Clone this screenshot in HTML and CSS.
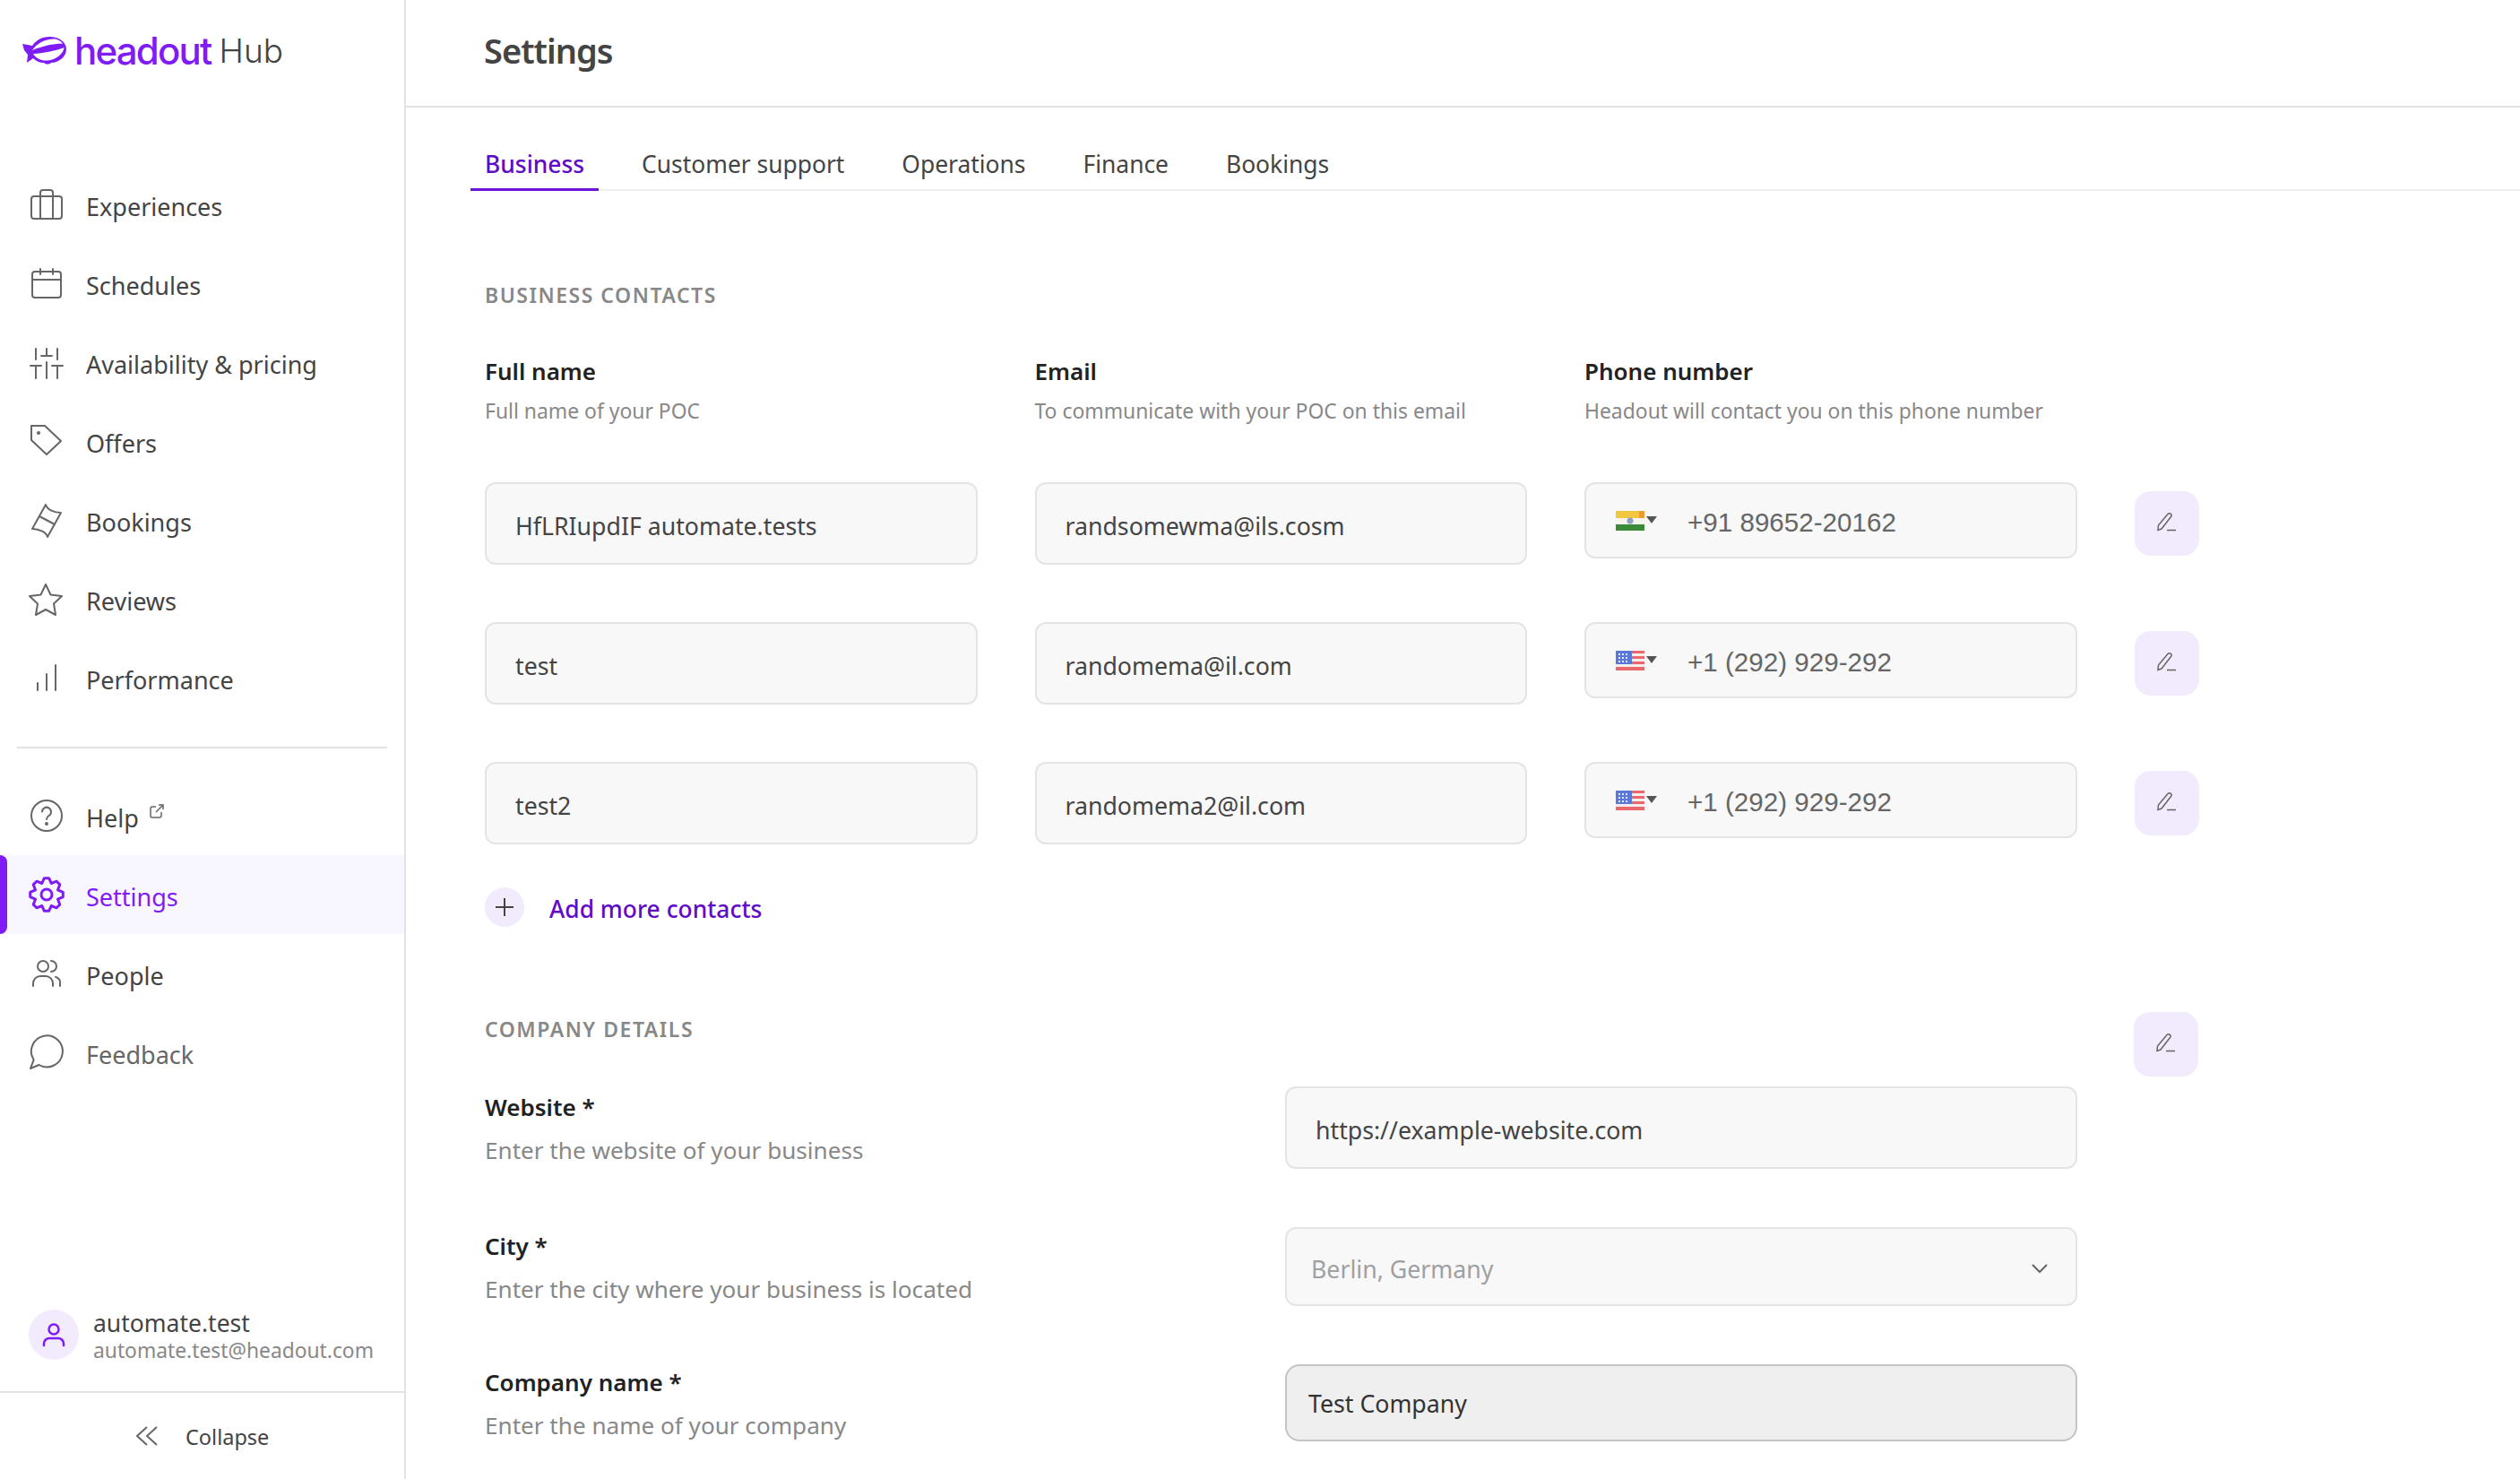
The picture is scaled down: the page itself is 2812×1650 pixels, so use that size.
FILE: index.html
```html
<!DOCTYPE html>
<html lang="en">
<head>
    <meta charset="UTF-8">
    <title>Settings - Headout Hub</title>
    <link rel="stylesheet" href="styles.css">
</head>
<body>
    <div class="app">
        <aside class="sidebar">
            <div class="logo">
                <svg class="logo-mark" width="50" height="33" viewBox="0 0 50 33">
                    <path fill="#7f1cf6" d="M1 9L12 11C16 5 23 1 31 1C42 1 50 7 50 15C50 23 42 30 33 30C31 32 27 32 25 30C20 30 16 28 13 25L6 30L7 21L3 16z"/>
                    <path fill="#fff" d="M12 16C17 8 28 2.500 38 3.500C41 4 44 6 46 8.700C36 8.500 24 11 12 16z"/>
                    <path fill="#fff" d="M13 20C24 19.500 37 17 47.500 13C47 20 38 27 29 27.500C22 28 16 25 13 20z"/>
                </svg>
                <span class="logo-name">headout</span>
                <span class="logo-hub">Hub</span>
            </div>

            <nav class="nav">
                <a class="nav-item">
                    <svg class="nav-icon" viewBox="0 0 40 40"><rect x="3" y="9" width="34" height="25" rx="3"/><path d="M13 9V5a3 3 0 0 1 3-3h8a3 3 0 0 1 3 3v4M13 9v25M27 9v25"/></svg>
                    <span>Experiences</span>
                </a>
                <a class="nav-item">
                    <svg class="nav-icon" viewBox="0 0 40 40"><rect x="4" y="5" width="32" height="29" rx="3"/><path d="M4 14h32M13 2v6M27 2v6"/></svg>
                    <span>Schedules</span>
                </a>
                <a class="nav-item">
                    <svg class="nav-icon" viewBox="0 0 40 40"><path d="M8 3v12M2 22h12M8 22v14M20 3v8M14 11h12M20 18v18M32 3v12M26 22h12M32 22v14"/></svg>
                    <span>Availability &amp; pricing</span>
                </a>
                <a class="nav-item">
                    <svg class="nav-icon" viewBox="0 0 40 40"><path d="M3 1h15l18 17-16 15L3 17z"/><circle class="dot" cx="11" cy="9" r="1"/></svg>
                    <span>Offers</span>
                </a>
                <a class="nav-item">
                    <svg class="nav-icon" viewBox="0 0 40 40"><path d="M19 1c1 5 9 9 17 9L21 37c-1-5-9-9-17-9zM12 14l17 9"/></svg>
                    <span>Bookings</span>
                </a>
                <a class="nav-item">
                    <svg class="nav-icon" viewBox="0 0 40 40"><path d="M19 2l5.500 11.500L37 15l-9 8.500 2 12.500-11-6-11 6 2-12.500L1 15l12.500-1.500z"/></svg>
                    <span>Reviews</span>
                </a>
                <a class="nav-item">
                    <svg class="nav-icon" viewBox="0 0 40 40"><path d="M10 24v8M20 14v18M30 4v28"/></svg>
                    <span>Performance</span>
                </a>
            </nav>

            <div class="nav-divider"></div>

            <nav class="nav nav-lower">
                <a class="nav-item">
                    <svg class="nav-icon" viewBox="0 0 40 40"><circle cx="20" cy="20" r="17"/><path d="M15 15.500a5 5 0 1 1 7.500 4.500c-1.500 1-2.500 2-2.500 4"/><circle class="dot" cx="20" cy="29" r="1"/></svg>
                    <span>Help</span>
                    <svg class="ext-icon" viewBox="0 0 16 16"><path d="M7 3H3a2 2 0 0 0-2 2v8a2 2 0 0 0 2 2h8a2 2 0 0 0 2-2V9M7 9l8-8M10 1h5v5"/></svg>
                </a>
                <a class="nav-item active">
                    <svg class="nav-icon" viewBox="0 0 40 40"><path d="M17.400 1.700H22.600L25.200 7.500L31.100 5.200L34.800 8.900L32.500 14.800L38.300 17.400V22.600L32.500 25.200L34.800 31.100L31.100 34.800L25.200 32.500L22.600 38.300H17.400L14.800 32.500L8.900 34.800L5.200 31.100L7.500 25.200L1.700 22.600V17.400L7.500 14.800L5.200 8.900L8.900 5.200L14.800 7.500Z"/><circle cx="20" cy="20" r="6"/></svg>
                    <span>Settings</span>
                </a>
                <a class="nav-item">
                    <svg class="nav-icon" viewBox="0 0 40 40"><circle cx="16" cy="12" r="6"/><path d="M5 34v-3a8 8 0 0 1 8-8h6a8 8 0 0 1 8 8v3M25 6a6 6 0 0 1 0 12M30 24a6 6 0 0 1 5 7v3"/></svg>
                    <span>People</span>
                </a>
                <a class="nav-item nav-item-light">
                    <svg class="nav-icon" viewBox="0 0 40 40"><path d="M2 38l3.600-9.700A17.500 17.500 0 1 1 11.500 34z"/></svg>
                    <span>Feedback</span>
                </a>
            </nav>

            <div class="user">
                <div class="avatar">
                    <svg width="56" height="56" viewBox="0 0 56 56"><circle cx="28" cy="22" r="5.500"/><path d="M17 40v-2a6 6 0 0 1 6-6h10a6 6 0 0 1 6 6v2"/></svg>
                </div>
                <div class="user-text">
                    <div class="user-name">automate.test</div>
                    <div class="user-mail">automate.test@headout.com</div>
                </div>
            </div>
            <div class="collapse">
                <svg width="24" height="22" viewBox="0 0 24 22"><path d="M12 1L1 11l11 10M23 1L12 11l11 10"/></svg>
                <span>Collapse</span>
            </div>
        </aside>

        <main class="main">
            <div class="page-header"><h1>Settings</h1></div>

            <div class="tabs">
                <div class="tab active">Business</div>
                <div class="tab">Customer support</div>
                <div class="tab">Operations</div>
                <div class="tab">Finance</div>
                <div class="tab">Bookings</div>
            </div>

            <div class="content">
                <h2 class="section-title">BUSINESS CONTACTS</h2>

                <div class="contact-grid contact-head">
                    <div>
                        <div class="label">Full name</div>
                        <div class="hint">Full name of your POC</div>
                    </div>
                    <div>
                        <div class="label">Email</div>
                        <div class="hint">To communicate with your POC on this email</div>
                    </div>
                    <div>
                        <div class="label">Phone number</div>
                        <div class="hint">Headout will contact you on this phone number</div>
                    </div>
                </div>

                <div class="contact-grid">
                    <div class="field">HfLRIupdIF automate.tests</div>
                    <div class="field">randsomewma@ils.cosm</div>
                    <div class="phone">
                        <svg class="flag" viewBox="0 0 32 22"><rect width="32" height="8" fill="#f3c63f"/><rect x="26" width="6" height="8" fill="#ee9a2e"/><rect y="8" width="32" height="7" fill="#f6f4ec"/><rect y="15" width="32" height="7" fill="#3c8a3a"/><circle cx="16" cy="11" r="3.500" fill="#8f9dc4"/></svg>
                        <span class="caret"></span>
                        <span class="phone-num">+91 89652-20162</span>
                    </div>
                    <div class="edit-btn"><svg viewBox="0 0 24 24"><path d="M2 19.500L2.500 14L13 1.500C14 .5 15.500 .5 16.500 1.500C17.500 2.500 17.500 3.500 16.500 4.500L6 18zM12 19.500H22"/></svg></div>
                </div>

                <div class="contact-grid">
                    <div class="field">test</div>
                    <div class="field">randomema@il.com</div>
                    <div class="phone">
                        <svg class="flag" viewBox="0 0 32 22"><rect width="32" height="22" fill="#f6eeee"/><path fill="#e8686c" d="M0 0h32v3H0zM0 6h32v3H0zM0 12h32v3H0zM0 18h32v4H0z"/><rect width="18" height="15" fill="#5a78d8"/><path fill="#dfe6fb" d="M3 3h2v2H3zM7 3h2v2H7zM11 3h2v2h-2zM3 7h2v2H3zM7 7h2v2H7zM11 7h2v2h-2zM3 11h2v2H3zM7 11h2v2H7zM11 11h2v2h-2z"/></svg>
                        <span class="caret"></span>
                        <span class="phone-num">+1 (292) 929-292</span>
                    </div>
                    <div class="edit-btn"><svg viewBox="0 0 24 24"><path d="M2 19.500L2.500 14L13 1.500C14 .5 15.500 .5 16.500 1.500C17.500 2.500 17.500 3.500 16.500 4.500L6 18zM12 19.500H22"/></svg></div>
                </div>

                <div class="contact-grid">
                    <div class="field">test2</div>
                    <div class="field">randomema2@il.com</div>
                    <div class="phone">
                        <svg class="flag" viewBox="0 0 32 22"><rect width="32" height="22" fill="#f6eeee"/><path fill="#e8686c" d="M0 0h32v3H0zM0 6h32v3H0zM0 12h32v3H0zM0 18h32v4H0z"/><rect width="18" height="15" fill="#5a78d8"/><path fill="#dfe6fb" d="M3 3h2v2H3zM7 3h2v2H7zM11 3h2v2h-2zM3 7h2v2H3zM7 7h2v2H7zM11 7h2v2h-2zM3 11h2v2H3zM7 11h2v2H7zM11 11h2v2h-2z"/></svg>
                        <span class="caret"></span>
                        <span class="phone-num">+1 (292) 929-292</span>
                    </div>
                    <div class="edit-btn"><svg viewBox="0 0 24 24"><path d="M2 19.500L2.500 14L13 1.500C14 .5 15.500 .5 16.500 1.500C17.500 2.500 17.500 3.500 16.500 4.500L6 18zM12 19.500H22"/></svg></div>
                </div>

                <div class="add-more">
                    <span class="add-circle"><svg width="22" height="22" viewBox="0 0 22 22"><path d="M11 1v20M1 11h20"/></svg></span>
                    <span>Add more contacts</span>
                </div>

                <div class="company-head">
                    <h2 class="section-title">COMPANY DETAILS</h2>
                    <div class="edit-btn"><svg viewBox="0 0 24 24"><path d="M2 19.500L2.500 14L13 1.500C14 .5 15.500 .5 16.500 1.500C17.500 2.500 17.500 3.500 16.500 4.500L6 18zM12 19.500H22"/></svg></div>
                </div>

                <div class="company-row">
                    <div class="company-text">
                        <div class="label">Website *</div>
                        <div class="hint-big">Enter the website of your business</div>
                    </div>
                    <div class="field">https://example-website.com</div>
                </div>
                <div class="company-row">
                    <div class="company-text">
                        <div class="label">City *</div>
                        <div class="hint-big">Enter the city where your business is located</div>
                    </div>
                    <div class="select">
                        <span>Berlin, Germany</span>
                        <svg width="20" height="12" viewBox="0 0 20 12"><path d="M2 2l8 8 8-8"/></svg>
                    </div>
                </div>
                <div class="company-row">
                    <div class="company-text">
                        <div class="label">Company name *</div>
                        <div class="hint-big">Enter the name of your company</div>
                    </div>
                    <div class="field-active">Test Company</div>
                </div>
            </div>
        </main>
    </div>
</body>
</html>
```

FILE: styles.css
```css
* {
    margin: 0;
    padding: 0;
    box-sizing: border-box;
}
html, body {
    height: 100%;
    overflow: hidden;
}
body {
    font-family: "Noto Sans", "Open Sans", sans-serif;
    background: white;
    color: #444;
}
.app {
    display: flex;
    height: 1650px;
}

/* sidebar */
.sidebar {
    width: 453px;
    flex-shrink: 0;
    border-right: 2px solid #e2e2e2;
    display: flex;
    flex-direction: column;
}
.logo {
    height: 186px;
    padding: 36px 0 0 24px;
    display: flex;
    align-items: flex-start;
}
.logo-mark {
    margin-top: 4px;
}
.logo-name {
    font-family: Inter, sans-serif;
    font-size: 42px;
    line-height: 42px;
    font-weight: 500;
    letter-spacing: -1.800px;
    color: #7f1cf6;
    margin-left: 9px;
}
.logo-hub {
    font-family: Inter, sans-serif;
    font-size: 37px;
    line-height: 42px;
    font-weight: 300;
    color: #444;
    margin-left: 9px;
}
.nav-item {
    height: 88px;
    display: flex;
    align-items: center;
    padding-left: 32px;
    font-size: 27px;
    color: #444;
}
.nav-lower .nav-item span {
    margin-top: 4px;
}
.nav-icon {
    width: 40px;
    height: 40px;
    margin-right: 24px;
    fill: none;
    stroke: #666;
    stroke-width: 2;
    stroke-linejoin: round;
    stroke-linecap: round;
    flex-shrink: 0;
}
.nav-icon .dot {
    fill: #666;
}
.nav-item-light {
    color: #666;
}
.ext-icon {
    width: 16px;
    height: 16px;
    margin: -10px 0 0 12px;
    fill: none;
    stroke: #666;
    stroke-width: 1.500;
}
.nav-item.active {
    position: relative;
    background: #f8f6fe;
    color: #7f1cf6;
}
.nav-item.active::before {
    content: "";
    position: absolute;
    left: 0;
    top: 0;
    bottom: 0;
    width: 8px;
    background: #7f1cf6;
    border-radius: 0 8px 8px 0;
}
.nav-item.active .nav-icon {
    stroke: #7f1cf6;
    stroke-width: 3;
}
.nav-divider {
    height: 2px;
    margin: 31px 19px;
    background: #e2e2e2;
}
.user {
    margin-top: auto;
    height: 106px;
    display: flex;
    align-items: center;
    padding: 0 0 22px 32px;
    border-bottom: 2px solid #e2e2e2;
}
.avatar {
    width: 56px;
    height: 56px;
    border-radius: 50%;
    background: #f2eafd;
    margin-right: 16px;
}
.avatar svg {
    fill: none;
    stroke: #7f1cf6;
    stroke-width: 2.500;
    stroke-linecap: round;
}
.user-text {
    margin-top: 3px;
}
.user-name {
    font-size: 26.500px;
    line-height: 31px;
    color: #444;
}
.user-mail {
    font-size: 22.800px;
    line-height: 29px;
    color: #888;
}
.collapse {
    height: 96px;
    display: flex;
    align-items: center;
    padding-left: 152px;
    font-size: 23.500px;
    color: #444;
}
.collapse span {
    margin-top: 2px;
}
.collapse svg {
    fill: none;
    stroke: #666;
    stroke-width: 2;
    margin-right: 31px;
}

/* main */
.main {
    flex: 1;
    min-width: 0;
}
.page-header {
    height: 120px;
    border-bottom: 2px solid #e2e2e2;
    padding: 30px 0 0 87px;
}
.page-header h1 {
    font-size: 38px;
    line-height: 52px;
    font-weight: 600;
    letter-spacing: -1px;
    color: #444;
}
.tabs {
    height: 93px;
    margin-left: 72px;
    display: flex;
    gap: 32px;
    align-items: flex-end;
    border-bottom: 2px solid #f0f0f0;
}
.tab {
    height: 51px;
    padding: 0 16px;
    font-size: 26.400px;
    line-height: 42px;
    color: #444;
    margin-bottom: -2px;
}
.tab.active {
    color: #5f0cc7;
    font-weight: 500;
    border-bottom: 3px solid #6a14d8;
}
.content {
    padding: 0 0 0 88px;
}
.section-title {
    font-size: 23px;
    line-height: 28px;
    font-weight: 600;
    letter-spacing: 1.500px;
    color: #888;
    padding-top: 102px;
}
.contact-grid {
    display: grid;
    grid-template-columns: repeat(3, 549.500px) 72px;
    column-gap: 64px;
    align-items: start;
    height: 156px;
}
.contact-head {
    height: 195px;
    padding-top: 51px;
}
.label {
    font-size: 26px;
    line-height: 40px;
    font-weight: 600;
    color: #222;
}
.hint {
    font-size: 22.900px;
    line-height: 32px;
    margin-top: 9px;
    color: #888;
}
.company-text .label {
    line-height: 36px;
}
.hint-big {
    font-size: 26.100px;
    line-height: 36px;
    margin-top: 12px;
    color: #888;
}
.company-text {
    margin-top: 2px;
}
.field {
    height: 92px;
    background: #f8f8f8;
    border: 2px solid #e4e4e4;
    border-radius: 12px;
    padding: 4px 32px 0;
    display: flex;
    align-items: center;
    font-size: 26.700px;
    color: #444;
}
.phone {
    height: 85px;
    background: #f8f8f8;
    border: 2px solid #e4e4e4;
    border-radius: 12px;
    display: flex;
    align-items: center;
    padding: 4px 0 0 33px;
}
.flag {
    width: 32px;
    height: 22px;
    margin-top: -4px;
    filter: blur(0.600px);
}
.caret {
    width: 0;
    height: 0;
    margin: -6px 0 0 2px;
    border-left: 6px solid transparent;
    border-right: 6px solid transparent;
    border-top: 8px solid #555;
}
.phone-num {
    font-family: "Liberation Sans", Arial, sans-serif;
    font-size: 29.600px;
    color: #666;
    margin-left: 34px;
}
.edit-btn {
    width: 72px;
    height: 72px;
    margin-top: 10px;
    border-radius: 18px;
    background: #f2eafd;
    display: flex;
    align-items: center;
    justify-content: center;
}
.edit-btn svg {
    width: 24px;
    height: 24px;
    fill: none;
    stroke: #666;
    stroke-width: 1.500;
}
.add-more {
    display: flex;
    align-items: center;
    gap: 28px;
    margin-top: -16px;
    font-size: 26.400px;
    font-weight: 500;
    color: #5f0cc7;
}
.add-more span:last-child {
    margin-top: 4px;
}
.add-circle {
    width: 44px;
    height: 44px;
    border-radius: 50%;
    background: #f2eafd;
    display: flex;
    align-items: center;
    justify-content: center;
}
.add-circle svg {
    fill: none;
    stroke: #444;
    stroke-width: 2;
}
.company-head {
    width: 1912px;
    display: flex;
    justify-content: space-between;
    align-items: flex-start;
    margin-top: 95px;
}
.company-head .section-title {
    padding-top: 5px;
}
.company-head .edit-btn {
    margin-top: 0;
}
.company-head + .company-row {
    margin-top: 11px;
}
.company-row {
    display: grid;
    grid-template-columns: 893px 884px;
    align-items: center;
    margin-bottom: 65px;
}
.select {
    height: 88px;
    background: #f8f8f8;
    border: 2px solid #e4e4e4;
    border-radius: 12px;
    padding: 4px 30px 0 27px;
    display: flex;
    align-items: center;
    justify-content: space-between;
    font-size: 26.700px;
    color: #a0a0a0;
}
.select svg {
    fill: none;
    stroke: #666;
    stroke-width: 2;
}
.field-active {
    height: 86px;
    background: #efefef;
    border: 2px solid #c4c4c4;
    border-radius: 16px;
    padding: 0 24px;
    display: flex;
    align-items: center;
    font-size: 26.700px;
    color: #333;
}
```
